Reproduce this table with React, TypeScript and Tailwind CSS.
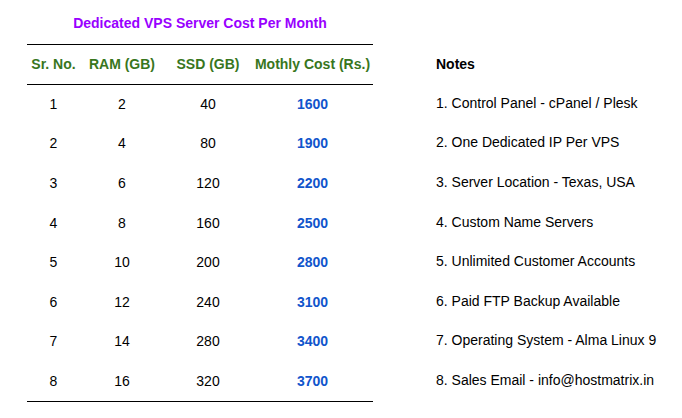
const plans = [
  { sr: 1, ram: 2, ssd: 40, cost: 1600 },
  { sr: 2, ram: 4, ssd: 80, cost: 1900 },
  { sr: 3, ram: 6, ssd: 120, cost: 2200 },
  { sr: 4, ram: 8, ssd: 160, cost: 2500 },
  { sr: 5, ram: 10, ssd: 200, cost: 2800 },
  { sr: 6, ram: 12, ssd: 240, cost: 3100 },
  { sr: 7, ram: 14, ssd: 280, cost: 3400 },
  { sr: 8, ram: 16, ssd: 320, cost: 3700 },
];

const notes = [
  "1. Control Panel - cPanel / Plesk",
  "2. One Dedicated IP Per VPS",
  "3. Server Location - Texas, USA",
  "4. Custom Name Servers",
  "5. Unlimited Customer Accounts",
  "6. Paid FTP Backup Available",
  "7. Operating System - Alma Linux 9",
  "8. Sales Email - info@hostmatrix.in",
];

export default function App() {
  return (
    <div className="w-[682px] h-[418px] bg-white font-['Liberation_Sans',Arial,sans-serif] text-[14px] text-black flex">
      <div className="ml-[27px] w-[346px] flex flex-col">
        <div className="h-[44px] flex items-center justify-center pt-[2px] font-bold text-[#9900ff]">
          Dedicated VPS Server Cost Per Month
        </div>
        <div className="border-t border-black" />
        <div className="h-[38.5px] flex items-center font-bold text-[#38761d] text-center">
          <div className="w-[53px]">Sr. No.</div>
          <div className="w-[84px]">RAM (GB)</div>
          <div className="w-[88px]">SSD (GB)</div>
          <div className="w-[121px] whitespace-nowrap">Mothly Cost (Rs.)</div>
        </div>
        <div className="border-t border-black" />
        {plans.map((p) => (
          <div key={p.sr} className="h-[39.6px] flex items-center text-center">
            <div className="w-[53px]">{p.sr}</div>
            <div className="w-[84px]">{p.ram}</div>
            <div className="w-[88px]">{p.ssd}</div>
            <div className="w-[121px] font-bold text-[#1155cc]">{p.cost}</div>
          </div>
        ))}
        <div className="border-t border-black" />
      </div>
      <div className="ml-[63px] flex flex-col pt-[45px] whitespace-nowrap">
        <div className="h-[38.5px] flex items-center font-bold">Notes</div>
        {notes.map((n) => (
          <div key={n} className="h-[39.6px] flex items-center">
            {n}
          </div>
        ))}
      </div>
    </div>
  );
}
